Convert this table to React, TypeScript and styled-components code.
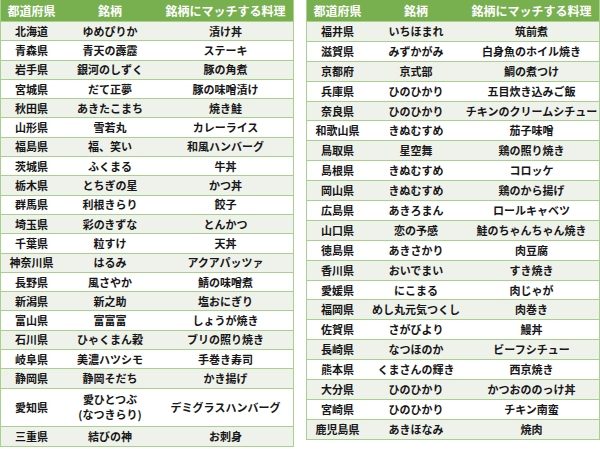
import React from 'react';
import styled, { createGlobalStyle } from 'styled-components';

type Entry = { pref: string; brand: string[]; dish: string; tall?: boolean };

const GREEN = '#78b04f';
const LINE = '#a9d18e';
const BAND = '#eef2ea';

const leftRows: Entry[] = [
  { pref: '北海道', brand: ['ゆめぴりか'], dish: '漬け丼' },
  { pref: '青森県', brand: ['青天の霹靂'], dish: 'ステーキ' },
  { pref: '岩手県', brand: ['銀河のしずく'], dish: '豚の角煮' },
  { pref: '宮城県', brand: ['だて正夢'], dish: '豚の味噌漬け' },
  { pref: '秋田県', brand: ['あきたこまち'], dish: '焼き鮭' },
  { pref: '山形県', brand: ['雪若丸'], dish: 'カレーライス' },
  { pref: '福島県', brand: ['福、笑い'], dish: '和風ハンバーグ' },
  { pref: '茨城県', brand: ['ふくまる'], dish: '牛丼' },
  { pref: '栃木県', brand: ['とちぎの星'], dish: 'かつ丼' },
  { pref: '群馬県', brand: ['利根きらり'], dish: '餃子' },
  { pref: '埼玉県', brand: ['彩のきずな'], dish: 'とんかつ' },
  { pref: '千葉県', brand: ['粒すけ'], dish: '天丼' },
  { pref: '神奈川県', brand: ['はるみ'], dish: 'アクアパッツァ' },
  { pref: '長野県', brand: ['風さやか'], dish: '鯖の味噌煮' },
  { pref: '新潟県', brand: ['新之助'], dish: '塩おにぎり' },
  { pref: '富山県', brand: ['富富富'], dish: 'しょうが焼き' },
  { pref: '石川県', brand: ['ひゃくまん穀'], dish: 'ブリの照り焼き' },
  { pref: '岐阜県', brand: ['美濃ハツシモ'], dish: '手巻き寿司' },
  { pref: '静岡県', brand: ['静岡そだち'], dish: 'かき揚げ' },
  { pref: '愛知県', brand: ['愛ひとつぶ', '(なつきらり)'], dish: 'デミグラスハンバーグ', tall: true },
  { pref: '三重県', brand: ['結びの神'], dish: 'お刺身' },
];

const rightRows: Entry[] = [
  { pref: '福井県', brand: ['いちほまれ'], dish: '筑前煮' },
  { pref: '滋賀県', brand: ['みずかがみ'], dish: '白身魚のホイル焼き' },
  { pref: '京都府', brand: ['京式部'], dish: '鯛の煮つけ' },
  { pref: '兵庫県', brand: ['ひのひかり'], dish: '五目炊き込みご飯' },
  { pref: '奈良県', brand: ['ひのひかり'], dish: 'チキンのクリームシチュー' },
  { pref: '和歌山県', brand: ['きぬむすめ'], dish: '茄子味噌' },
  { pref: '鳥取県', brand: ['星空舞'], dish: '鶏の照り焼き' },
  { pref: '島根県', brand: ['きぬむすめ'], dish: 'コロッケ' },
  { pref: '岡山県', brand: ['きぬむすめ'], dish: '鶏のから揚げ' },
  { pref: '広島県', brand: ['あきろまん'], dish: 'ロールキャベツ' },
  { pref: '山口県', brand: ['恋の予感'], dish: '鮭のちゃんちゃん焼き' },
  { pref: '徳島県', brand: ['あきさかり'], dish: '肉豆腐' },
  { pref: '香川県', brand: ['おいでまい'], dish: 'すき焼き' },
  { pref: '愛媛県', brand: ['にこまる'], dish: '肉じゃが' },
  { pref: '福岡県', brand: ['めし丸元気つくし'], dish: '肉巻き' },
  { pref: '佐賀県', brand: ['さがびより'], dish: '鰻丼' },
  { pref: '長崎県', brand: ['なつほのか'], dish: 'ビーフシチュー' },
  { pref: '熊本県', brand: ['くまさんの輝き'], dish: '西京焼き' },
  { pref: '大分県', brand: ['ひのひかり'], dish: 'かつおののっけ丼' },
  { pref: '宮崎県', brand: ['ひのひかり'], dish: 'チキン南蛮' },
  { pref: '鹿児島県', brand: ['あきほなみ'], dish: '焼肉' },
];

const GlobalStyle = createGlobalStyle`
  body {
    margin: 0;
    background: #ffffff;
    font-family: "Noto Sans CJK JP", "Noto Sans", sans-serif;
  }
`;

const Page = styled.div`
  display: flex;
  align-items: flex-start;
  gap: 12px;
  width: 600px;
  height: 449px;
  overflow: hidden;
`;

const Table = styled.div`
  width: 294px;
  border-left: 1px solid ${LINE};
  border-right: 1px solid ${LINE};
  border-bottom: 1px solid ${LINE};
  box-sizing: border-box;
`;

const Grid = styled.div<{ $h: number; $band?: boolean }>`
  display: grid;
  grid-template-columns: 61px 96px 1fr;
  height: ${(p) => p.$h}px;
  box-sizing: border-box;
  background: ${(p) => (p.$band ? BAND : '#ffffff')};
  border-top: 1px solid ${LINE};
`;

const Head = styled(Grid)`
  background: ${GREEN};
  border-top: none;
  color: #ffffff;
  font-size: 12px;
`;

const Cell = styled.div`
  display: flex;
  flex-direction: column;
  align-items: center;
  justify-content: center;
  font-weight: 700;
  font-size: inherit;
  line-height: 15px;
  white-space: nowrap;
`;

const Body = styled.div`
  color: #161616;
  font-size: 11px;
`;

const PrefTable = ({ rows, rowH }: { rows: Entry[]; rowH: number }): JSX.Element => (
  <Table>
    <Head $h={21}>
      <Cell>都道府県</Cell>
      <Cell>銘柄</Cell>
      <Cell>銘柄にマッチする料理</Cell>
    </Head>
    <Body>
      {rows.map((r, i) => (
        <Grid key={r.pref} $h={r.tall ? rowH * 2 : rowH} $band={i % 2 === 0}>
          <Cell>{r.pref}</Cell>
          <Cell>
            {r.brand.map((b) => (
              <span key={b}>{b}</span>
            ))}
          </Cell>
          <Cell>{r.dish}</Cell>
        </Grid>
      ))}
    </Body>
  </Table>
);

const App = (): JSX.Element => (
  <>
    <GlobalStyle />
    <Page>
      <PrefTable rows={leftRows} rowH={19.3} />
      <PrefTable rows={rightRows} rowH={19.9} />
    </Page>
  </>
);

export default App;
